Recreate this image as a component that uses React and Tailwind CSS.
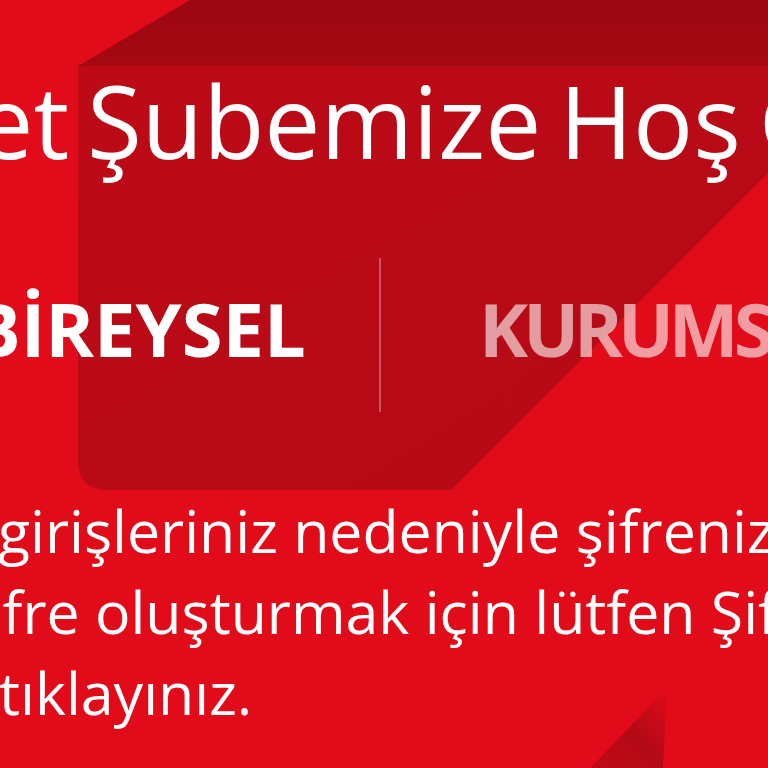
import React from 'react';

function Backdrop() {
  return (
    <svg
      className="absolute inset-0 h-full w-full"
      viewBox="0 0 768 768"
      preserveAspectRatio="none"
      aria-hidden="true"
    >
      <defs>
        <linearGradient id="band" x1="0" y1="0" x2="0" y2="1">
          <stop offset="0" stopColor="#9c0711" />
          <stop offset="1" stopColor="#a50913" />
        </linearGradient>
        <linearGradient id="panel" x1="0" y1="0" x2="1" y2="1">
          <stop offset="0" stopColor="#bd0a17" />
          <stop offset="1" stopColor="#b50a16" />
        </linearGradient>
        <linearGradient id="wedge" x1="1" y1="0" x2="0" y2="1">
          <stop offset="0" stopColor="#e00b19" />
          <stop offset="0.5" stopColor="#b40a17" />
          <stop offset="1" stopColor="#c20a17" />
        </linearGradient>
      </defs>
      <rect width="768" height="768" fill="#e20b19" />
      <path
        d="M78 66 H768 V173 L451 490 H108 Q78 490 78 460 Z"
        fill="url(#panel)"
      />
      <path d="M190 0 H768 V66 H78 Z" fill="url(#band)" />
      <path d="M667 688 L663 768 H590 Z" fill="url(#wedge)" />
    </svg>
  );
}

export default function App() {
  return (
    <div
      className="relative h-[768px] w-[768px] overflow-hidden bg-[#e20b19] text-white"
      style={{ fontFamily: '"Open Sans", "Noto Sans", sans-serif' }}
    >
      <Backdrop />
      <div className="relative flex flex-col">
        <h1 className="mt-[59px] ml-[-306px] whitespace-nowrap text-[100px] font-normal leading-[122px] [word-spacing:-8px]">
          İnternet Şubemize Hoş Geldiniz
        </h1>

        <div className="mt-[77px] flex items-start">
          <div className="ml-[-29px] w-[408px] shrink-0">
            <span className="mt-[26px] block whitespace-nowrap text-[74px] font-bold leading-[90px]">
              BİREYSEL
            </span>
          </div>
          <div className="h-[154px] w-[2px] shrink-0 bg-white/30" />
          <div className="shrink-0 pl-[98px]">
            <span className="mt-[26px] block whitespace-nowrap text-[74px] font-bold leading-[90px] tracking-[-5px] text-white/60">
              KURUMSAL
            </span>
          </div>
        </div>

        <div className="mt-[78px] whitespace-nowrap text-[59px] leading-[81px]">
          <p className="ml-[-2px]">girişleriniz nedeniyle şifreniz bloke olmuştur.</p>
          <p className="ml-[-173px]">Yeni şifre oluşturmak için lütfen Şifremi Unuttum</p>
          <p className="ml-[-1px]">tıklayınız.</p>
        </div>
      </div>
    </div>
  );
}
